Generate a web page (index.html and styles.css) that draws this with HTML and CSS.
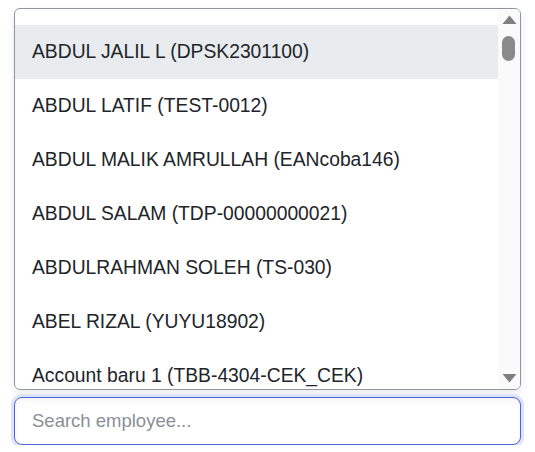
FILE: index.html
```html
<!DOCTYPE html>
<html lang="en">
<head>
    <meta charset="UTF-8">
    <meta name="viewport" content="width=device-width, initial-scale=1.0">
    <title>Employee picker</title>
    <link rel="stylesheet" href="styles.css">
</head>
<body>
    <div class="picker">
        <div class="listbox">
            <ul class="options">
                <li class="option active">ABDUL JALIL L (DPSK2301100)</li>
                <li class="option">ABDUL LATIF (TEST-0012)</li>
                <li class="option">ABDUL MALIK AMRULLAH (EANcoba146)</li>
                <li class="option">ABDUL SALAM (TDP-00000000021)</li>
                <li class="option">ABDULRAHMAN SOLEH (TS-030)</li>
                <li class="option">ABEL RIZAL (YUYU18902)</li>
                <li class="option">Account baru 1 (TBB-4304-CEK_CEK)</li>
            </ul>
            <div class="scrollbar">
                <svg class="arrow" width="15" height="9" viewBox="0 0 15 9"><polygon points="0.5,9 7.5,0.5 14.5,9" fill="#7f7f7f"/></svg>
                <div class="track"><div class="thumb"></div></div>
                <svg class="arrow" width="15" height="9" viewBox="0 0 15 9"><polygon points="0.5,0 7.5,8.5 14.5,0" fill="#7f7f7f"/></svg>
            </div>
        </div>
        <input type="text" class="search" placeholder="Search employee..." autofocus>
    </div>
</body>
</html>
```

FILE: styles.css
```css
body {
    font-family: "Liberation Sans", Arial, sans-serif;
    background-color: #ffffff;
    margin: 0;
    padding: 8px 14px 0 14px;
}
.picker {
    display: flex;
    flex-direction: column;
    gap: 7px;
}
.listbox {
    display: flex;
    height: 380px;
    overflow: hidden;
    border: 1px solid #8f96a1;
    border-radius: 6px;
    box-shadow: 0px 4px 10px rgba(0, 0, 0, 0.08);
}
.options {
    flex: 1;
    list-style: none;
    margin: 0;
    padding: 16px 0 0 0;
    overflow: hidden;
}
.option {
    height: 54px;
    line-height: 54px;
    padding: 0 17px;
    font-size: 19.3px;
    color: #212529;
    white-space: nowrap;
    cursor: pointer;
}
.option.active {
    background-color: #e9ecef;
}
.scrollbar {
    width: 22px;
    box-sizing: border-box;
    display: flex;
    flex-direction: column;
    align-items: flex-start;
    padding: 6px 3px 6px 4px;
    background-color: #fafafa;
}
.arrow {
    display: block;
}
.track {
    flex: 1;
    padding-top: 12px;
}
.thumb {
    width: 13px;
    height: 25px;
    border-radius: 7px;
    background-color: #8a8a8a;
}
.search {
    box-sizing: border-box;
    width: 100%;
    height: 48px;
    padding: 0 17px;
    font-family: "Liberation Sans", Arial, sans-serif;
    font-size: 18.5px;
    color: #212529;
    caret-color: #000000;
    border: 1px solid #4f63d8;
    border-radius: 8px;
    outline: none;
    box-shadow: 0 0 0 3px #dbe4fb, inset 0 3px 5px rgba(0, 0, 0, 0.04);
}
.search::placeholder {
    color: #8a8f98;
}
```
